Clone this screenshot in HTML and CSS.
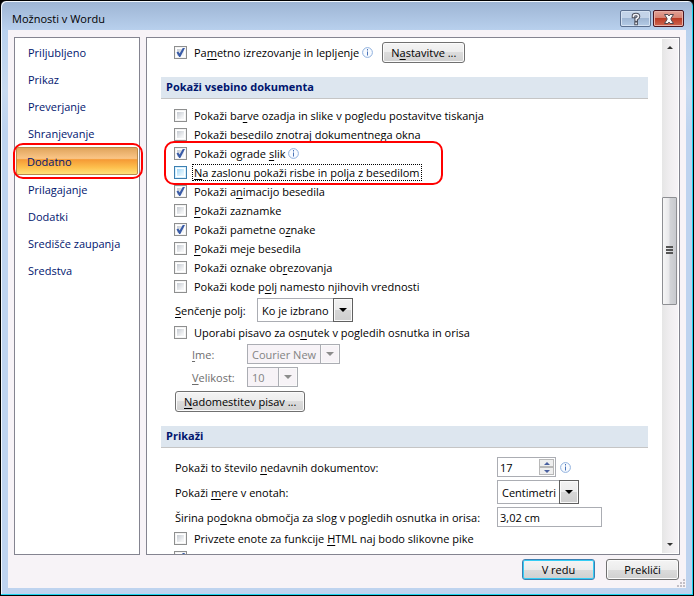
FILE: index.html
```html
<!DOCTYPE html>
<html lang="sl">
<head>
  <meta charset="UTF-8" />
  <meta name="viewport" content="width=device-width, initial-scale=1" />
  <title>Možnosti v Wordu</title>
  <link rel="stylesheet" href="styles.css">
</head>
<body>
  <div class="window">
    <header class="titlebar">
      <h1>Možnosti v Wordu</h1>
      <button class="win-btn help" aria-label="Pomoč">
        <svg width="12" height="14" viewBox="0 0 12 14" fill="none" stroke-linecap="square">
          <path d="M3.5 4.5V4Q3.5 2.5 6 2.5T8.5 4.5Q8.5 5.8 6.2 7V8M6.1 11.3V11.4" stroke="#4b4f5c" stroke-width="3.6" />
          <path d="M3.5 4.5V4Q3.5 2.5 6 2.5T8.5 4.5Q8.5 5.8 6.2 7V8M6.1 11.3V11.4" stroke="#f4f4f8" stroke-width="1.6" />
        </svg>
      </button>
      <button class="win-btn close" aria-label="Zapri">
        <svg width="14" height="12" viewBox="0 0 14 12" fill="none">
          <path d="M2.5 1.5H6L7 3L8 1.5H11.5L9 5.5V6.5L11.5 10.5H8L7 9L6 10.5H2.5L5 6.5V5.5Z" fill="#fafafa" stroke="#50474f" />
        </svg>
      </button>
    </header>

    <div class="client">
      <div class="panes">
        <nav class="sidebar">
          <a href="#">Priljubljeno</a>
          <a href="#">Prikaz</a>
          <a href="#">Preverjanje</a>
          <a href="#">Shranjevanje</a>
          <a href="#" class="active">Dodatno</a>
          <a href="#">Prilagajanje</a>
          <a href="#">Dodatki</a>
          <a href="#">Središče zaupanja</a>
          <a href="#">Sredstva</a>
        </nav>

        <main class="panel">
          <div class="content">
            <div class="row first">
              <label class="check"><input type="checkbox" checked /><span>Pa<u>m</u>etno izrezovanje in lepljenje</span></label>
              <svg class="info" width="11" height="11" viewBox="0 0 11 11"><circle cx="5.5" cy="5.5" r="4.9" /><path d="M5 2h1v1.5h-1zM5 4.5h1v4h-1z" /></svg>
              <button class="btn settings">N<u>a</u>stavitve ...</button>
            </div>

            <h2>Pokaži vsebino dokumenta</h2>
            <div class="checks">
              <label class="check"><input type="checkbox" /><span>Pokaži ba<u>r</u>ve ozadja in slike v pogledu postavitve tiskanja</span></label>
              <label class="check"><input type="checkbox" /><span>Pokaži besedilo zn<u>o</u>traj dokumentnega okna</span></label>
              <div class="marked">
                <div class="row">
                  <label class="check"><input type="checkbox" checked /><span>Pokaži ograde <u>s</u>lik</span></label>
                  <svg class="info" width="11" height="11" viewBox="0 0 11 11"><circle cx="5.5" cy="5.5" r="4.9" /><path d="M5 2h1v1.5h-1zM5 4.5h1v4h-1z" /></svg>
                </div>
                <label class="check focused"><input type="checkbox" /><span><u>N</u>a zaslonu pokaži risbe in polja z besedilom</span></label>
              </div>
              <label class="check"><input type="checkbox" checked /><span>Pokaži a<u>n</u>imacijo besedila</span></label>
              <label class="check"><input type="checkbox" /><span><u>P</u>okaži zaznamke</span></label>
              <label class="check"><input type="checkbox" checked /><span>Pokaži pametne o<u>z</u>nake</span></label>
              <label class="check"><input type="checkbox" /><span><u>P</u>okaži meje besedila</span></label>
              <label class="check"><input type="checkbox" /><span>Pokaži oznake ob<u>r</u>ezovanja</span></label>
              <label class="check"><input type="checkbox" /><span>Pokaži kode p<u>o</u>lj namesto njihovih vrednosti</span></label>
            </div>

            <div class="row shading">
              <label for="shading"><u>S</u>enčenje polj:</label>
              <span class="combo">
                <select id="shading"><option>Ko je izbrano</option></select>
                <span class="arrow"></span>
              </span>
            </div>
            <label class="check draft"><input type="checkbox" /><span>Uporabi pisavo za os<u>n</u>utek v pogledih osnutka in orisa</span></label>
            <div class="font-grid">
              <label for="font"><u>I</u>me:</label>
              <span class="combo disabled">
                <select id="font" disabled><option>Courier New</option></select>
                <span class="arrow"></span>
              </span>
              <label for="size"><u>V</u>elikost:</label>
              <span class="combo disabled small">
                <select id="size" disabled><option>10</option></select>
                <span class="arrow"></span>
              </span>
            </div>
            <button class="btn replace"><u>N</u>adomestitev pisav ...</button>

            <h2>Prikaži</h2>
            <div class="display-grid">
              <label for="recent">Pokaži to število <u>n</u>edavnih dokumentov:</label>
              <div class="row">
                <span class="spinner">
                  <input type="text" id="recent" value="17" />
                  <span class="steps">
                    <button aria-label="Več"></button>
                    <button class="down" aria-label="Manj"></button>
                  </span>
                </span>
                <svg class="info" width="11" height="11" viewBox="0 0 11 11"><circle cx="5.5" cy="5.5" r="4.9" /><path d="M5 2h1v1.5h-1zM5 4.5h1v4h-1z" /></svg>
              </div>
              <label for="units">Pokaži <u>m</u>ere v enotah:</label>
              <span class="combo units">
                <select id="units"><option>Centimetri</option></select>
                <span class="arrow"></span>
              </span>
              <label for="pane-width">Širina po<u>d</u>okna območja za slog v pogledih osnutka in orisa:</label>
              <input type="text" class="field" id="pane-width" value="3,02 cm" />
            </div>
            <label class="check html-units"><input type="checkbox" /><span>Privzete enote za funkcije <u>H</u>TML naj bodo slikovne pike</span></label>
            <label class="check"><input type="checkbox" checked /><span>Pokaži</span></label>
          </div>

          <div class="scrollbar">
            <span class="scroll-arrow"></span>
            <span class="thumb"><svg width="8" height="9" viewBox="0 0 8 9"><path d="M0 1h7M0 4h7M0 7h7" stroke="#555" stroke-width="2" /></svg></span>
            <span class="scroll-arrow down"></span>
          </div>
        </main>
      </div>

      <footer class="footer">
        <button class="btn default">V redu</button>
        <button class="btn">Prekliči</button>
        <svg class="grip" width="8" height="8" viewBox="0 0 8 8"><path d="M6 0h2v2h-2zM3 3h2v2h-2zM6 3h2v2h-2zM0 6h2v2h-2zM3 6h2v2h-2zM6 6h2v2h-2z" fill="#c3bfc6" /></svg>
      </footer>
    </div>
  </div>
</body>
</html>
```

FILE: styles.css
```css
*, *::before, *::after {
  box-sizing: border-box;
}
body {
  margin: 0;
  background-color: #000;
  font-family: "Open Sans", "Noto Sans", sans-serif;
  font-size: 11px;
  line-height: 15px;
  color: #000;
}
button, input, select {
  font: inherit;
  color: inherit;
  margin: 0;
}
h1, h2 {
  margin: 0;
}
u {
  text-underline-offset: 2px;
}

/* window frame */
.window {
  display: flex;
  flex-direction: column;
  height: 100vh;
  padding: 0 7px 7px;
  border: 1px solid #000;
  border-radius: 6px 6px 0 0;
  background: linear-gradient(#9db4d3, #b9d1ee 30px, #c8daf0 90px, #bed3ef 130px);
  box-shadow: inset -1px -1px #1cd3ee, inset 1px 1px #f2f7fc;
}
.titlebar {
  display: flex;
  align-items: center;
  gap: 2px;
  height: 29px;
  padding: 6px 2px 0 4px;
  flex: none;
}
.titlebar h1 {
  flex: 1;
  font-size: 11px;
  font-weight: normal;
}
.win-btn {
  display: flex;
  align-items: center;
  justify-content: center;
  width: 31px;
  height: 17px;
  padding: 0;
  border: 1px solid #5b6f8f;
  border-radius: 2px;
  background: linear-gradient(#c3d3e8 50%, #9fb6d3 50%, #b4cbe6);
  box-shadow: inset 0 0 0 1px #d5e2f2;
}
.win-btn.close {
  border-color: #4a1520;
  background: linear-gradient(#e3a196, #d5806f 50%, #bb3b25 50%, #cf6650);
  box-shadow: inset 0 0 0 1px #e8b0a6;
}
.client {
  flex: 1;
  min-height: 0;
  display: flex;
  flex-direction: column;
  padding: 7px 6px 0;
  background-color: #f7f3f7;
}
.panes {
  flex: 1;
  min-height: 0;
  display: flex;
  gap: 6px;
}

/* categories */
.sidebar {
  width: 126px;
  flex: none;
  padding: 1px;
  border: 1px solid #848490;
  background-color: #fff;
}
.sidebar a {
  display: flex;
  align-items: center;
  height: 27px;
  padding-left: 12px;
  color: #00156e;
  text-decoration: none;
}
.sidebar a.active {
  position: relative;
  height: 28px;
  margin-bottom: 1px;
  padding-left: 10px;
  border: 1px solid #b98a4a;
  border-radius: 2px;
  background: linear-gradient(#e0a45c, #fac586 40%, #f59a35 45%, #fdc04e 75%, #ffe07a);
}
.sidebar a.active::after {
  content: "";
  position: absolute;
  inset: -5px -6px -5px -4px;
  border: 2px solid #f00;
  border-radius: 10px;
}

/* options pane */
.panel {
  flex: 1;
  min-width: 0;
  display: flex;
  border: 1px solid #848490;
  background-color: #fff;
  overflow: hidden;
}
.content {
  flex: 1;
  min-width: 0;
  padding: 4px 14px 0;
}
.row {
  display: flex;
  align-items: center;
}
.first {
  height: 21px;
  padding-left: 13px;
}
.info {
  flex: none;
  margin-left: 2px;
  fill: #4a74b8;
}
.info circle {
  fill: #f8fbff;
  stroke: #8fb0dd;
}
h2 {
  height: 22px;
  margin: 14px 0 0;
  padding-left: 5px;
  border-bottom: 1px solid #c5c5c5;
  background-color: #dde6ef;
  color: #00156e;
  font-size: 11px;
  line-height: 20px;
}
.checks {
  margin-top: 7px;
  padding-left: 13px;
}
.check {
  display: flex;
  align-items: center;
  gap: 6px;
  height: 19px;
  white-space: nowrap;
}
.check input {
  appearance: none;
  flex: none;
  width: 13px;
  height: 13px;
  border: 1px solid #8e8f8f;
  background: linear-gradient(135deg, #c6cbd2, #f4f5f6 80%) content-box;
  padding: 2px;
  box-shadow: inset 0 0 0 1px #f4f4f4;
}
.check input:checked::before {
  content: "";
  display: block;
  width: 9px;
  height: 9px;
  margin: -1px;
  background-color: #3a5ca8;
  clip-path: polygon(5% 50%, 25% 40%, 40% 62%, 75% 0, 100% 0, 48% 100%, 35% 100%);
}
.check span {
  padding: 0 1px;
}
.focused input {
  border-color: #3c7fb1;
  background-image: linear-gradient(135deg, #a4d8f8, #e6f6fe 80%);
  box-shadow: inset 0 0 0 1px #d8f0fd;
}
.focused span {
  outline: 1px dotted #000;
}
.marked {
  position: relative;
}
.marked::after {
  content: "";
  position: absolute;
  top: -3px;
  left: -10px;
  width: 279px;
  height: 44px;
  border: 2px solid #f00;
  border-radius: 10px;
  pointer-events: none;
}

/* buttons */
.btn {
  height: 21px;
  padding: 0 8px;
  border: 1px solid #707070;
  border-radius: 3px;
  background: linear-gradient(#f4f4f4, #ececec 50%, #dcdcdc 50%, #d0d0d0);
  box-shadow: inset 0 0 0 1px #fbfbfb;
  white-space: nowrap;
  line-height: 17px;
}
.settings {
  margin-left: 9px;
}

/* drop-downs and fields */
.combo {
  display: inline-grid;
  grid-template-columns: 1fr;
  width: 96px;
  height: 24px;
}
.combo select, .combo .arrow {
  grid-area: 1 / 1;
}
.combo select {
  appearance: none;
  width: 100%;
  height: 100%;
  padding: 0 0 0 4px;
  border: 1px solid #abadb3;
  border-radius: 0;
  background-color: #fff;
}
.arrow {
  justify-self: end;
  display: flex;
  align-items: center;
  justify-content: center;
  width: 20px;
  border: 1px solid #606060;
  background: linear-gradient(#f2f2f2, #ebebeb 50%, #d6d6d6 50%, #cfcfcf);
  box-shadow: inset 0 0 0 1px #fafafa;
  pointer-events: none;
}
.arrow::before {
  content: "";
  border: 4px solid transparent;
  border-top-color: #000;
  border-bottom: 0;
}
.combo.disabled {
  width: 93px;
  height: 20px;
}
.combo.disabled.small {
  width: 51px;
}
.disabled select {
  background-color: #f7f3f7;
  color: #838383;
  opacity: 1;
}
.disabled .arrow {
  border-color: #abadb3;
  background: #f7f3f7;
}
.disabled .arrow::before {
  border-top-color: #8c8c8c;
}
.combo.units {
  width: 82px;
}
.shading {
  margin-top: 2px;
  padding-left: 14px;
}
.shading label {
  width: 82px;
}
.draft {
  margin-top: 1px;
}
.font-grid {
  display: grid;
  grid-template-columns: 55px 1fr;
  gap: 3px 0;
  align-items: center;
  margin-top: 2px;
  padding-left: 31px;
  color: #6d6d6d;
}
.replace {
  display: block;
  margin: 4px 0 0 14px;
}
.display-grid {
  display: grid;
  grid-template-columns: 322px 1fr;
  gap: 3px 0;
  align-items: center;
  margin-top: 9px;
  padding-left: 14px;
  white-space: nowrap;
}
.field, .spinner {
  width: 105px;
  height: 20px;
  border: 1px solid #abadb3;
  background-color: #fff;
}
.field {
  padding: 0 2px;
}
.spinner {
  display: flex;
  width: 59px;
}
.spinner input {
  flex: 1;
  min-width: 0;
  padding: 0 2px;
  border: 0;
  background: none;
}
.spinner + .info {
  margin-left: 4px;
}
.steps {
  display: flex;
  flex-direction: column;
  width: 16px;
  padding: 1px 1px 1px 0;
}
.steps button {
  flex: 1;
  display: flex;
  align-items: center;
  justify-content: center;
  padding: 0;
  border: 1px solid #b8b8b8;
  background-color: #efefef;
}
.steps button::before {
  content: "";
  border: 3px solid transparent;
  border-bottom-color: #4a61a0;
  border-top: 0;
}
.steps .down::before {
  border-top: 3px solid #4a61a0;
  border-bottom: 0;
}
.html-units {
  margin-top: 2px;
}
.content > .check {
  padding-left: 13px;
}

/* scrollbar */
.scrollbar {
  display: flex;
  flex-direction: column;
  width: 16px;
  margin: 1px 1px 1px 0;
  background: linear-gradient(to right, #e6e6e6, #f0eef0 50%, #f7f3f7);
}
.scroll-arrow {
  display: flex;
  align-items: center;
  justify-content: center;
  height: 17px;
}
.scroll-arrow::before {
  content: "";
  border: 3px solid transparent;
  border-bottom-color: #333;
  border-top: 0;
}
.scroll-arrow.down {
  margin-top: auto;
}
.scroll-arrow.down::before {
  border-top: 3px solid #333;
  border-bottom: 0;
}
.thumb {
  display: flex;
  align-items: center;
  justify-content: center;
  width: 15px;
  height: 21%;
  margin-top: 141px;
  border: 1px solid #8e8f93;
  border-radius: 1px;
  background: linear-gradient(to right, #f6f6f6, #e9e9eb 45%, #d2d3d7 55%, #c8c9ce);
}

/* dialog buttons */
.footer {
  position: relative;
  display: flex;
  justify-content: flex-end;
  gap: 11px;
  padding: 4px 1px 8px;
}
.footer .btn {
  width: 73px;
}
.footer .default {
  border-color: #3c7fb1;
  box-shadow: inset 0 0 0 1px #35cdf5;
}
.grip {
  position: absolute;
  right: -5px;
  bottom: 1px;
}
```
